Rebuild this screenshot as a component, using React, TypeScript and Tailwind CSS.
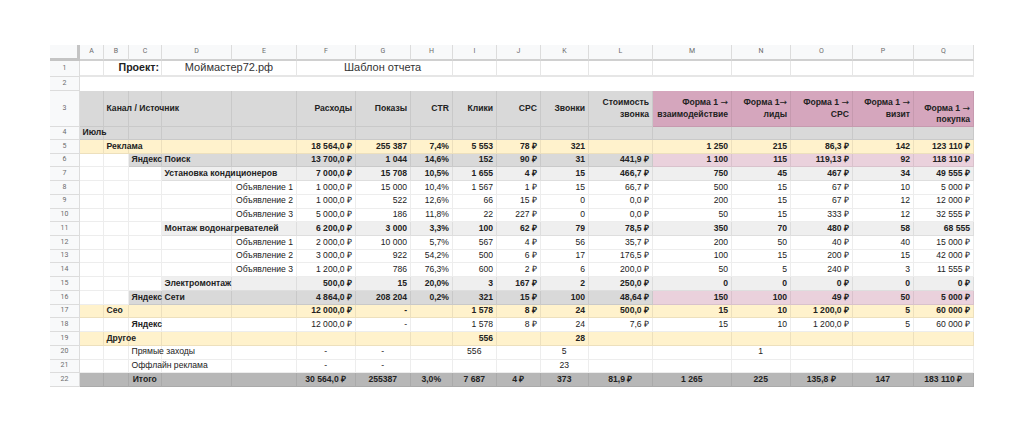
import React from "react";

const letters = ["A", "B", "C", "D", "E", "F", "G", "H", "I", "J", "K", "L", "M", "N", "O", "P", "Q"];

type Kind = "month" | "yellow" | "gray" | "light" | "plain" | "total";

interface Row {
  n: number;
  label: string;
  at: number; // column index of the label
  kind: Kind;
  vals: string[];
  bold?: boolean;
  labelBold?: boolean;
  labelRight?: boolean;
  center?: number[];
}

const rows: Row[] = [
  { n: 4, label: "Июль", at: 0, kind: "month", vals: [], labelBold: true },
  { n: 5, label: "Реклама", at: 1, kind: "yellow", bold: true, vals: ["18 564,0 ₽", "255 387", "7,4%", "5 553", "78 ₽", "321", "", "1 250", "215", "86,3 ₽", "142", "123 110 ₽"] },
  { n: 6, label: "Яндекс Поиск", at: 2, kind: "gray", bold: true, vals: ["13 700,0 ₽", "1 044", "14,6%", "152", "90 ₽", "31", "441,9 ₽", "1 100", "115", "119,13 ₽", "92", "118 110 ₽"] },
  { n: 7, label: "Установка кондиционеров", at: 3, kind: "light", bold: true, vals: ["7 000,0 ₽", "15 708", "10,5%", "1 655", "4 ₽", "15", "466,7 ₽", "750", "45", "467 ₽", "34", "49 555 ₽"] },
  { n: 8, label: "Объявление 1", at: 4, kind: "plain", labelRight: true, vals: ["1 000,0 ₽", "15 000", "10,4%", "1 567", "1 ₽", "15", "66,7 ₽", "500", "15", "67 ₽", "10", "5 000 ₽"] },
  { n: 9, label: "Объявление 2", at: 4, kind: "plain", labelRight: true, vals: ["1 000,0 ₽", "522", "12,6%", "66", "15 ₽", "0", "0,0 ₽", "200", "15", "67 ₽", "12", "12 000 ₽"] },
  { n: 10, label: "Объявление 3", at: 4, kind: "plain", labelRight: true, vals: ["5 000,0 ₽", "186", "11,8%", "22", "227 ₽", "0", "0,0 ₽", "50", "15", "333 ₽", "12", "32 555 ₽"] },
  { n: 11, label: "Монтаж водонагревателей", at: 3, kind: "light", bold: true, vals: ["6 200,0 ₽", "3 000", "3,3%", "100", "62 ₽", "79", "78,5 ₽", "350", "70", "480 ₽", "58", "68 555"] },
  { n: 12, label: "Объявление 1", at: 4, kind: "plain", labelRight: true, vals: ["2 000,0 ₽", "10 000", "5,7%", "567", "4 ₽", "56", "35,7 ₽", "200", "50", "40 ₽", "40", "15 000 ₽"] },
  { n: 13, label: "Объявление 2", at: 4, kind: "plain", labelRight: true, vals: ["3 000,0 ₽", "922", "54,2%", "500", "6 ₽", "17", "176,5 ₽", "100", "15", "200 ₽", "15", "42 000 ₽"] },
  { n: 14, label: "Объявление 3", at: 4, kind: "plain", labelRight: true, vals: ["1 200,0 ₽", "786", "76,3%", "600", "2 ₽", "6", "200,0 ₽", "50", "5", "240 ₽", "3", "11 555 ₽"] },
  { n: 15, label: "Электромонтаж", at: 3, kind: "light", bold: true, vals: ["500,0 ₽", "15", "20,0%", "3", "167 ₽", "2", "250,0 ₽", "0", "0", "0 ₽", "0", "0 ₽"] },
  { n: 16, label: "Яндекс Сети", at: 2, kind: "gray", bold: true, vals: ["4 864,0 ₽", "208 204", "0,2%", "321", "15 ₽", "100", "48,64 ₽", "150", "100", "49 ₽", "50", "5 000 ₽"] },
  { n: 17, label: "Сео", at: 1, kind: "yellow", bold: true, vals: ["12 000,0 ₽", "-", "", "1 578", "8 ₽", "24", "500,0 ₽", "15", "10", "1 200,0 ₽", "5", "60 000 ₽"] },
  { n: 18, label: "Яндекс", at: 2, kind: "plain", labelBold: true, vals: ["12 000,0 ₽", "-", "", "1 578", "8 ₽", "24", "7,6 ₽", "15", "10", "1 200,0 ₽", "5", "60 000 ₽"] },
  { n: 19, label: "Другое", at: 1, kind: "yellow", bold: true, vals: ["", "", "", "556", "", "28", "", "", "", "", "", ""] },
  { n: 20, label: "Прямые заходы", at: 2, kind: "plain", center: [0, 1, 3, 5, 8], vals: ["-", "-", "", "556", "", "5", "", "", "1", "", "", ""] },
  { n: 21, label: "Оффлайн реклама", at: 2, kind: "plain", center: [0, 1, 5], vals: ["-", "-", "", "", "", "23", "", "", "", "", "", ""] },
  { n: 22, label: "Итого", at: 2, kind: "total", bold: true, center: [0, 1, 2, 3, 4, 5, 6, 7, 8, 9, 10, 11], vals: ["30 564,0 ₽", "255387", "3,0%", "7 687", "4 ₽", "373", "81,9 ₽", "1 265", "225", "135,8 ₽", "147", "183 110 ₽"] },
];

const fill = (kind: Kind, col: number) => {
  if (kind === "month") return "bg-[#d9d9d9]";
  if (kind === "yellow") return "bg-[#fff2cc]";
  if (kind === "total") return "bg-[#b7b7b7]";
  if (kind === "gray") {
    if (col < 2) return "bg-white";
    return col >= 12 ? "bg-[#ead1dc]" : "bg-[#d9d9d9]";
  }
  if (kind === "light") return col < 3 ? "bg-white" : "bg-[#efefef]";
  return "bg-white";
};

const cellBase = "border-r border-b border-black/[0.07] flex items-center whitespace-nowrap pl-[2.5px] pr-[3px] min-w-0";
const headBase = "bg-[#f8f9fa] border-r border-b border-[#dcdcdc] flex items-center justify-center text-[#6b6b6b] text-[7px] font-['Roboto',sans-serif]";

const heads = [
  { a: "Расходы", cls: "bg-[#d9d9d9]" },
  { a: "Показы", cls: "bg-[#d9d9d9]" },
  { a: "CTR", cls: "bg-[#d9d9d9]" },
  { a: "Клики", cls: "bg-[#d9d9d9]" },
  { a: "CPC", cls: "bg-[#d9d9d9]" },
  { a: "Звонки", cls: "bg-[#d9d9d9]" },
  { a: "Стоимость", b: "звонка", cls: "bg-[#d9d9d9]" },
  { a: "Форма 1 →", b: "взаимодействие", cls: "bg-[#d5a6bd]" },
  { a: "Форма 1→", b: "лиды", cls: "bg-[#d5a6bd]" },
  { a: "Форма 1 →", b: "CPC", cls: "bg-[#d5a6bd]" },
  { a: "Форма 1 →", b: "визит", cls: "bg-[#d5a6bd]" },
  { a: "Форма 1 →", b: "покупка", cls: "bg-[#d5a6bd] pt-[11px]" },
];

// the arrow in Liberation Sans is too thin at this size
const withArrow = (s: string) => {
  if (!s.includes("→")) return s;
  return (
    <>
      {s.replace("→", "")}
      <span className="font-['DejaVu_Sans',sans-serif] text-[9px] font-normal">→</span>
    </>
  );
};

export default function App() {
  return (
    <div className="w-[1024px] h-[432px] bg-white pt-[45px] pl-[50px] overflow-hidden font-['Liberation_Sans',Arial,sans-serif] text-[8.6px] leading-[11.5px] text-[#222]">
      <div className="grid w-[924px] grid-cols-[30px_24px_25px_33px_70px_65px_59px_55px_42px_44px_44px_48px_64px_79px_59px_62px_61px_60px] grid-rows-[16px_16px_14px_36px_13px_repeat(18,13.72px)]">
        {/* column letters */}
        <div className="bg-[#f8f9fa] border-r-[3px] border-b-[3px] border-[#c4c4c4]" />
        {letters.map((l) => (
          <div key={l} className={headBase + " border-b-2 border-b-[#d0d0d0]"}>
            {l}
          </div>
        ))}

        {/* row 1 */}
        <div className={headBase}>1</div>
        <div className="border-r border-b-2 border-[#e6e6e6]" />
        <div className="col-span-2 border-r border-b-2 border-[#e6e6e6] flex items-center justify-end pr-[2px] text-[10.6px] font-bold">
          Проект:
        </div>
        <div className="col-span-2 border-r border-b-2 border-[#e6e6e6] flex items-center justify-center text-[11px] text-[#333]">
          Моймастер72.рф
        </div>
        <div className="col-span-3 border-r border-b-2 border-[#e6e6e6] flex items-center pl-[47px] text-[11px] text-[#333]">
          Шаблон отчета
        </div>
        {letters.slice(8).map((l) => (
          <div key={l} className="border-r border-b-2 border-[#e6e6e6]" />
        ))}

        {/* row 2 */}
        <div className={headBase}>2</div>
        <div className="col-span-17 bg-white" />

        {/* row 3 */}
        <div className={headBase}>3</div>
        <div className={cellBase + " bg-[#d9d9d9]"} />
        <div className={cellBase + " bg-[#d9d9d9] font-bold z-10"}>Канал / Источник</div>
        <div className={cellBase + " bg-[#d9d9d9]"} />
        <div className={cellBase + " bg-[#d9d9d9]"} />
        <div className={cellBase + " bg-[#d9d9d9]"} />
        {heads.map((h) => (
          <div key={h.a} className={cellBase + " justify-end font-bold " + h.cls}>
            <div className="text-right">
              <div>{withArrow(h.a)}</div>
              {h.b && <div>{h.b}</div>}
            </div>
          </div>
        ))}

        {/* data rows */}
        {rows.map((r) => (
          <React.Fragment key={r.n}>
            <div className={headBase}>{r.n}</div>
            {letters.map((l, col) => {
              const isLabel = col === r.at;
              if (isLabel) {
                return (
                  <div
                    key={l}
                    className={
                      cellBase +
                      " z-10 " +
                      fill(r.kind, col) +
                      (r.labelRight ? " justify-end" : "") +
                      (r.kind === "total" ? " justify-center" : "") +
                      (r.bold || r.labelBold ? " font-bold" : "")
                    }
                  >
                    {r.label}
                  </div>
                );
              }
              const vi = col - 5;
              const val = vi >= 0 ? r.vals[vi] ?? "" : "";
              const centered = r.center?.includes(vi);
              return (
                <div
                  key={l}
                  className={
                    cellBase +
                    " " +
                    fill(r.kind, col) +
                    (centered ? " justify-center" : " justify-end") +
                    (r.bold ? " font-bold" : "")
                  }
                >
                  {val}
                </div>
              );
            })}
          </React.Fragment>
        ))}
      </div>
    </div>
  );
}
